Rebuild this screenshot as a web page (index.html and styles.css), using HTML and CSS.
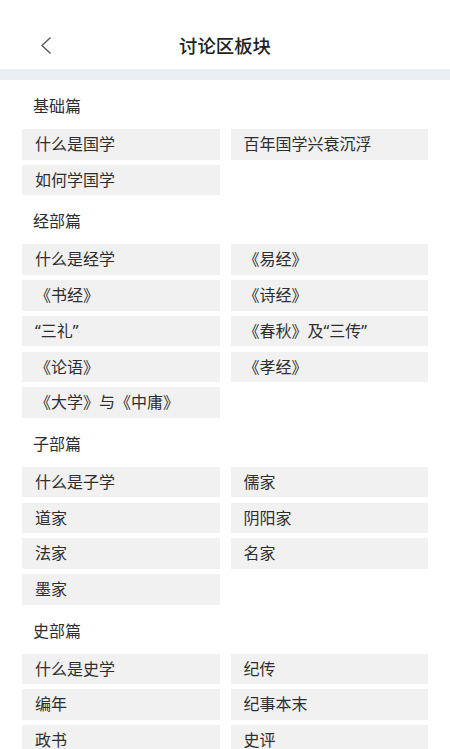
FILE: index.html
```html
<!DOCTYPE html>
<html lang="zh-CN">
<head>
<meta charset="utf-8">
<title>讨论区板块</title>
<link rel="stylesheet" href="styles.css">
</head>
<body>
<header class="topbar">
  <span class="back" aria-label="返回">
    <svg width="14" height="19" viewBox="0 0 14 19"><path d="M11.5 1.5 L3 9.5 L11.5 17.5" fill="none" stroke="#5a5a5a" stroke-width="1.4"/></svg>
  </span>
  <h1 class="title">讨论区板块</h1>
</header>
<div class="band"></div>
<main class="content">
  <section class="group">
    <h2 class="group-title">基础篇</h2>
    <div class="grid">
      <div class="cell">什么是国学</div>
      <div class="cell">百年国学兴衰沉浮</div>
      <div class="cell">如何学国学</div>
    </div>
  </section>
  <section class="group">
    <h2 class="group-title">经部篇</h2>
    <div class="grid">
      <div class="cell">什么是经学</div>
      <div class="cell">《易经》</div>
      <div class="cell">《书经》</div>
      <div class="cell">《诗经》</div>
      <div class="cell">“三礼”</div>
      <div class="cell">《春秋》及“三传”</div>
      <div class="cell">《论语》</div>
      <div class="cell">《孝经》</div>
      <div class="cell">《大学》与《中庸》</div>
    </div>
  </section>
  <section class="group">
    <h2 class="group-title">子部篇</h2>
    <div class="grid">
      <div class="cell">什么是子学</div>
      <div class="cell">儒家</div>
      <div class="cell">道家</div>
      <div class="cell">阴阳家</div>
      <div class="cell">法家</div>
      <div class="cell">名家</div>
      <div class="cell">墨家</div>
    </div>
  </section>
  <section class="group">
    <h2 class="group-title">史部篇</h2>
    <div class="grid">
      <div class="cell">什么是史学</div>
      <div class="cell">纪传</div>
      <div class="cell">编年</div>
      <div class="cell">纪事本末</div>
      <div class="cell">政书</div>
      <div class="cell">史评</div>
    </div>
  </section>
</main>
</body>
</html>
```

FILE: styles.css
```css
* { box-sizing: border-box; }
html, body {
  margin: 0;
  padding: 0;
  background: #ffffff;
  font-family: "Noto Sans", "Noto Sans CJK SC", sans-serif;
  color: #2e2e2e;
}
.topbar {
  height: 69px;
  position: relative;
  display: flex;
  align-items: flex-end;
  justify-content: center;
  padding-bottom: 10px;
  background: #ffffff;
}
.back {
  position: absolute;
  left: 39px;
  top: 36px;
  display: block;
  width: 14px;
  height: 19px;
}
.back svg { display: block; }
.title {
  margin: 0;
  font-size: 18.4px;
  font-weight: 500;
  line-height: 26px;
  color: #1e1e1e;
  letter-spacing: 0;
}
.band {
  height: 11px;
  background: #eceff2;
}
.content {
  padding: 0 22px;
}
.group-title {
  margin: 0;
  padding: 16px 0 13px 11px;
  font-size: 16px;
  line-height: 20px;
  font-weight: 400;
  color: #2e2e2e;
}
.grid {
  display: grid;
  grid-template-columns: 1fr 1fr;
  column-gap: 11px;
  row-gap: 5.25px;
}
.cell {
  height: 30.5px;
  background: #f1f1f1;
  padding-left: 13px;
  font-size: 16px;
  line-height: 30.5px;
  color: #2e2e2e;
  white-space: nowrap;
}
```
